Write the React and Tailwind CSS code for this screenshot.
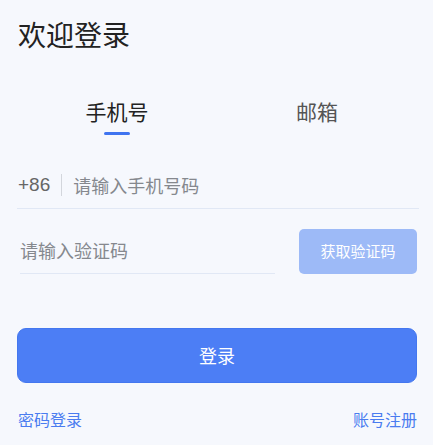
import React, { useState } from "react";

const font = { fontFamily: '"Noto Sans CJK SC", "Noto Sans", sans-serif' };

const App = () => {
  const [tab, setTab] = useState("phone");

  return (
    <div
      className="min-h-[445px] w-full bg-[#f6f8fd] pl-[17px] pr-[16px] pt-[14px]"
      style={font}
    >
      <h1 className="h-[40px] text-[28px] leading-[40px] text-[#222] pl-[1px]">
        欢迎登录
      </h1>

      {/* 切换方式 */}
      <div className="mt-[42px] grid grid-cols-2">
        <button
          onClick={() => setTab("phone")}
          className="flex flex-col items-center"
        >
          <span
            className={`h-[30px] text-[21px] leading-[30px] ${
              tab === "phone" ? "text-[#222]" : "text-[#555]"
            }`}
          >
            手机号
          </span>
          <span
            className={`mt-[6px] h-[3px] w-[26px] rounded-full ${
              tab === "phone" ? "bg-[#3f74f0]" : "bg-transparent"
            }`}
          ></span>
        </button>
        <button
          onClick={() => setTab("email")}
          className="flex flex-col items-center"
        >
          <span
            className={`h-[30px] text-[21px] leading-[30px] ${
              tab === "email" ? "text-[#222]" : "text-[#555]"
            }`}
          >
            邮箱
          </span>
          <span
            className={`mt-[6px] h-[3px] w-[26px] rounded-full ${
              tab === "email" ? "bg-[#3f74f0]" : "bg-transparent"
            }`}
          ></span>
        </button>
      </div>

      {/* 手机号 */}
      <div className="mt-[27px] mr-[-2px] flex h-[47px] items-center border-b border-[#e1e8f5] pl-[1px]">
        <span className="text-[19px] text-[#666]" style={{ fontFamily: '"Liberation Sans", sans-serif' }}>
          +86
        </span>
        <span className="mx-[11px] h-[22px] w-px bg-[#d3d6dc]"></span>
        <input
          type="text"
          placeholder="请输入手机号码"
          className="flex-1 bg-transparent text-[18px] text-[#333] outline-none placeholder:text-[#85888e]"
        />
      </div>

      {/* 验证码 */}
      <div className="mt-[19px] flex items-center justify-between">
        <div className="ml-[3px] flex h-[46px] w-[255px] items-center border-b border-[#e1e8f5]">
          <input
            type="text"
            placeholder="请输入验证码"
            className="w-full bg-transparent text-[18px] text-[#333] outline-none placeholder:text-[#85888e]"
          />
        </div>
        <button className="h-[45px] w-[118px] rounded-[5px] bg-[#9dbaf7] text-[15px] text-white">
          获取验证码
        </button>
      </div>

      <button className="mt-[54px] h-[55px] w-full rounded-[9px] border border-[#4477ef] bg-[#4c7ef5] text-[18px] text-white">
        登录
      </button>

      <div className="mt-[24px] flex items-center justify-between pl-[1px]">
        <span className="text-[16px] leading-[24px] text-[#4a7cf0]">密码登录</span>
        <span className="text-[16px] leading-[24px] text-[#4a7cf0]">账号注册</span>
      </div>
    </div>
  );
};

export default App;
